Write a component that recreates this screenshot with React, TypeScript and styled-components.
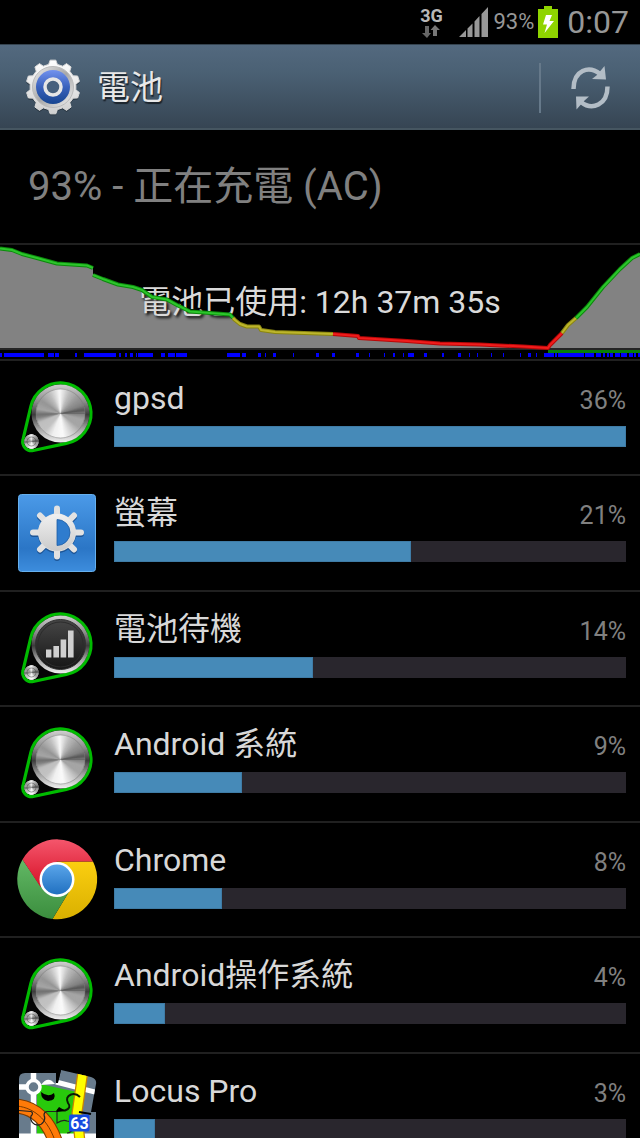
import React from 'react';
import styled, { createGlobalStyle } from 'styled-components';

const GlobalStyle = createGlobalStyle`
  * { box-sizing: border-box; }
  body {
    margin: 0;
    background: #000;
    color: #d6d6d6;
    font-family: Roboto, "Noto Sans CJK TC", sans-serif;
  }
`;

const Screen = styled.div`
  display: flex;
  flex-direction: column;
  height: 100vh;
  overflow: hidden;
  background: #000;
`;

const StatusBar = styled.div`
  flex: none;
  display: flex;
  align-items: center;
  justify-content: flex-end;
  height: 44px;
  padding-right: 11px;
  color: #979797;
`;

const Network = styled.div`
  display: flex;
  flex-direction: column;
  align-items: center;
  width: 24px;
  margin-right: 16px;
  font-size: 18px;
  font-weight: 700;
  line-height: 18px;
  color: #b8b8b8;
`;

const BatteryLevel = styled.span`
  margin: 0 4px;
  font-size: 22px;
  line-height: 44px;
`;

const Clock = styled.time`
  margin-left: 9px;
  font-size: 32px;
  line-height: 44px;
`;

const Header = styled.header`
  flex: none;
  display: flex;
  align-items: center;
  height: 86px;
  padding: 2px 0 0 26px;
  border-top: 1px solid #35434f;
  border-bottom: 2px solid #465661;
  background: linear-gradient(#53697f, #4a6073 35%, #364553);
`;

const Title = styled.h1`
  flex: 1;
  margin: 0 0 0 16px;
  font-size: 33px;
  font-weight: 400;
  line-height: 48px;
  color: #e8e8e8;
  text-shadow: 1px 2px 1px #1a222a;
`;

const RefreshButton = styled.button`
  display: flex;
  align-items: center;
  justify-content: center;
  width: 101px;
  height: 50px;
  padding: 0;
  border: 0;
  border-left: 2px solid #66798a;
  background: none;
`;

const ChargeState = styled.p`
  flex: none;
  height: 115px;
  margin: 0;
  padding-left: 28px;
  border-bottom: 2px solid #202020;
  font-size: 40px;
  line-height: 114px;
  color: #808080;
`;

const History = styled.section`
  flex: none;
  display: grid;
  height: 116px;
  border-bottom: 2px solid #202020;

  > * {
    grid-area: 1 / 1;
    min-width: 0;
  }
`;

const Plot = styled.svg`
  display: block;
  width: 100%;
  height: 114px;
  z-index: 0;
`;

const Caption = styled.p`
  z-index: 0;
  margin: 0;
  padding-top: 38px;
  font-size: 32px;
  line-height: 38px;
  text-align: center;
  color: #dadada;
  text-shadow: 2px 2px 3px #000;
`;

const AppList = styled.ul`
  flex: 1;
  min-height: 0;
  margin: 0;
  padding: 0;
  overflow: hidden;
  list-style: none;
`;

const AppRow = styled.li`
  display: flex;
  align-items: flex-start;
  gap: 17px;
  height: 115px;
  padding: 17px 14px 0 17px;
  border-bottom: 2px solid #202020;

  &:nth-child(even) {
    height: 116px;
  }
`;

const AppIcon = styled.svg`
  flex: none;
  width: 80px;
  height: 80px;
  overflow: visible;
`;

const Usage = styled.div`
  flex: 1;
  min-width: 0;
`;

const UsageText = styled.div`
  display: flex;
  justify-content: space-between;
  align-items: baseline;
  height: 48px;
  line-height: 41px;
`;

const AppName = styled.span`
  font-size: 32px;
  color: #d8d8d8;
`;

const Percent = styled.span`
  font-size: 25px;
  color: #808080;
`;

const Track = styled.div`
  height: 21px;
  background: #29262d;
`;

const Fill = styled.div`
  height: 100%;
  background: #468ab8;
  box-shadow: inset 0 0 0 1px #3f7ca6;
`;

const polar = (cx: number, cy: number, r: number, deg: number) => {
  const a = (deg * Math.PI) / 180;
  return `${(cx + r * Math.cos(a)).toFixed(2)} ${(cy + r * Math.sin(a)).toFixed(2)}`;
};

// Brushed metal: thin wedges whose grey follows these angle/shade stops.
const shades = [
  [0, 130], [14, 165], [35, 165], [55, 205], [82, 250], [108, 240], [130, 195], [155, 190],
  [168, 130], [176, 110], [190, 165], [212, 150], [240, 190], [266, 248], [290, 190], [315, 155], [338, 130], [350, 85], [360, 130],
];
const shadeAt = (deg: number) => {
  const i = shades.findIndex(([a]) => a > deg);
  const [a0, s0] = shades[i - 1];
  const [a1, s1] = shades[i];
  return Math.round(s0 + ((s1 - s0) * (deg - a0)) / (a1 - a0));
};

const Metal = ({ cx, cy, r }: { cx: number; cy: number; r: number }) => (
  <g>
    {Array.from({ length: 120 }, (_, i) => {
      const deg = i * 3;
      const s = shadeAt(deg);
      const end = Math.min(deg + 12, 360);
      return (
        <path
          key={i}
          fill={`rgb(${s},${s},${s})`}
          d={`M${cx} ${cy}L${polar(cx, cy, r, deg)}A${r} ${r} 0 0 1 ${polar(cx, cy, r, end)}Z`}
        />
      );
    })}
  </g>
);

const RotorIcon = ({ signal = false }: { signal?: boolean }) => (
  <AppIcon viewBox="0 0 80 80" aria-hidden="true">
    <defs>
      <linearGradient id="rim" x1="0" y1="0" x2="0" y2="1">
        <stop offset="0" stopColor="#d0d0d0" />
        <stop offset=".3" stopColor="#8a8a8a" />
        <stop offset=".52" stopColor="#3c3c3c" />
        <stop offset=".75" stopColor="#a0a0a0" />
        <stop offset="1" stopColor="#f0f0f0" />
      </linearGradient>
      <linearGradient id="dial" x1="0" y1="0" x2="0" y2="1">
        <stop offset="0" stopColor="#464646" />
        <stop offset="1" stopColor="#161616" />
      </linearGradient>
    </defs>
    <g transform="translate(1 0)">
      <path
        d="M5 61.5L12.8 28.5A30.5 30.5 0 1 1 48.4 65.4L15.2 72.5A8.9 8.9 0 0 1 5 61.5Z"
        fill="#050505"
        stroke="#0b0"
        strokeWidth="3.2"
      />
      <circle cx="42.5" cy="35.5" r="29" fill="url(#rim)" />
      {signal ? (
        <>
          <circle cx="42.5" cy="35.5" r="25" fill="url(#dial)" stroke="#303030" />
          <circle cx="42.5" cy="35.5" r="22.5" fill="none" stroke="#2c2c2c" />
          <path d="M28 40.500h5.4v8H28zM35.4 37H41V48.500h-5.600zM42.600 30.500h5.600v18H42.600zM50 21.500H55.600V48.500h-5.600z" fill="#d0d0d0" />
        </>
      ) : (
        <>
          <Metal cx={42.5} cy={35.5} r={24.5} />
          <circle cx="42.5" cy="35.5" r="24.5" fill="none" stroke="#777" strokeOpacity=".5" />
        </>
      )}
      <Metal cx={13.5} cy={63.5} r={7} />
      <circle cx="13.5" cy="63.5" r="4.5" fill="none" stroke="#444" strokeOpacity=".5" />
    </g>
  </AppIcon>
);

const BrightnessIcon = () => (
  <AppIcon viewBox="0 0 80 80" aria-hidden="true">
    <defs>
      <linearGradient id="sky" x1="0" y1="0" x2="0" y2="1">
        <stop offset="0" stopColor="#4b9ae8" />
        <stop offset=".7" stopColor="#2b76c6" />
        <stop offset="1" stopColor="#3d8ddd" />
      </linearGradient>
      <linearGradient id="sun" x1="0" y1="0" x2="0" y2="1">
        <stop offset="0" stopColor="#f0f0f0" />
        <stop offset="1" stopColor="#cbcbcb" />
      </linearGradient>
    </defs>
    <rect x="1.5" y="1.5" width="77" height="77" rx="3" fill="url(#sky)" stroke="#66b0ee" />
    {[['#1d5596', 1.5], ['#e2e2e2', 0]].map(([color, dy]) => (
      <g key={color} transform={`translate(0 ${dy})`} stroke={color as string} strokeWidth="6" strokeLinecap="round">
        {[0, 45, 90, 135, 180, 225, 270, 315].map((deg) => (
          <path key={deg} d="M40 28V15.5" transform={`rotate(${deg} 40 39.5)`} />
        ))}
        <circle cx="40" cy="39.5" r="16" fill={color as string} />
      </g>
    ))}
    <circle cx="40" cy="39.5" r="18.5" fill="url(#sun)" />
    <path d="M40 26.5A13 13 0 0 1 40 52.5Z" fill="#2f7cce" stroke="#1d5da6" strokeWidth=".8" />
  </AppIcon>
);

const ChromeIcon = () => (
  <AppIcon viewBox="0 0 80 80" aria-hidden="true">
    <defs>
      <linearGradient id="red" x1="0" y1="0" x2="0" y2="1">
        <stop offset="0" stopColor="#f4566c" />
        <stop offset="1" stopColor="#d81228" />
      </linearGradient>
      <linearGradient id="green" x1="0" y1="0" x2="0" y2="1">
        <stop offset="0" stopColor="#62b865" />
        <stop offset="1" stopColor="#3b8e3e" />
      </linearGradient>
      <linearGradient id="yellow" x1="0" y1="0" x2="0" y2="1">
        <stop offset="0" stopColor="#fbce10" />
        <stop offset="1" stopColor="#d9b000" />
      </linearGradient>
      <linearGradient id="blue" x1="0" y1="0" x2="0" y2="1">
        <stop offset="0" stopColor="#5aa5ea" />
        <stop offset="1" stopColor="#2070c0" />
      </linearGradient>
    </defs>
    <path d="M40 21.5H76A40 40 0 0 1 35.5 79L53 50Z" fill="url(#yellow)" />
    <path d="M5.5 19.5A40 40 0 0 0 35.5 79L53 50L40 40L24 47Z" fill="url(#green)" />
    <path d="M5.5 19.5A40 40 0 0 1 76 21.5H40L23.5 47Z" fill="url(#red)" />
    <circle cx="40" cy="39.5" r="17.5" fill="#fff" />
    <circle cx="40" cy="39.5" r="15" fill="url(#blue)" />
  </AppIcon>
);

const MapIcon = () => (
  <AppIcon viewBox="0 0 80 80" aria-hidden="true">
    <clipPath id="tile">
      <path d="M2 8Q2 2 8 2H39V12H41L44-1L74 6Q80 8 79 13L74 41H79V80H2Z" />
    </clipPath>
    <g clipPath="url(#tile)">
      <rect x="2" y="-3" width="78" height="84" fill="#687b8c" />
      <path d="M2 16H16M16.500 2V80" stroke="#fff" strokeWidth="5.5" fill="none" />
      <path d="M20 23L23 13L60 21L62 42L57 63H20Z" fill="#28c90c" />
      <path d="M24 14Q31 4 38 13" fill="#fff" />
      <path d="M39 11L80 21.5M2 65H79" stroke="#fff" strokeWidth="5" fill="none" />
      <path d="M66 0L60 42L64 80" stroke="#c98500" strokeWidth="11" fill="none" />
      <path d="M66 0L60 42L64 80" stroke="#ff0" strokeWidth="8.5" fill="none" />
      <path d="M0 35C18 37 34 50 41 80" stroke="#7a3a00" strokeWidth="15" fill="none" />
      <path d="M0 35C18 37 34 50 41 80" stroke="#ff7a08" strokeWidth="13" fill="none" />
      <path d="M0 35C18 37 34 50 41 80" stroke="#7a3a00" strokeWidth="1" fill="none" />
    </g>
    <path d="M39 3V12L41 11L44-1Z" fill="#000" />
    <circle cx="16.5" cy="16" r="6.5" fill="#687b8c" stroke="#fff" strokeWidth="3.5" />
    <path d="M24 21Q31 27 37 22Q40 29 31 30Q24 29 24 21Z" fill="#000" />
    <path
      d="M2 39.5L14 40.5Q17 42 14 45A7 7 0 1 0 27 44Q27 41 30 40.5H40V52Q46 48 50 50A6 6 0 0 1 50 62"
      fill="none"
      stroke="#222"
      strokeWidth="1.2"
    />
    <path d="M40 39.5H48Q55 37 51 32Q48 26 54 23.500Q59 22 63 26" fill="none" stroke="#0a1a05" strokeWidth="2" />
    <path d="M39 40L42 36L48 39.500L40 41Z" fill="#000" />
    <path d="M62 41L74 43" stroke="#000" strokeWidth="2" />
    <rect x="52" y="43.5" width="20.5" height="17" rx="2" fill="#164be0" />
    <text x="62.5" y="58" fill="#fff" fontFamily="Roboto, sans-serif" fontWeight="700" fontSize="16" textAnchor="middle">63</text>
  </AppIcon>
);

const SettingsIcon = () => {
  const cx = 27;
  const cy = 28;
  const teeth = Array.from({ length: 10 }, (_, i) => {
    const a = i * 36 - 90;
    return [[23, -11], [27, -6], [27, 6], [23, 11]].map(([r, d]) => polar(cx, cy, r, a + d)).join('L');
  }).join('L');
  return (
    <svg width="55" height="58" viewBox="0 0 55 58" aria-hidden="true">
      <defs>
        <linearGradient id="cog" x1="0" y1="0" x2="0" y2="1">
          <stop offset="0" stopColor="#fff" />
          <stop offset="1" stopColor="#cfcfcf" />
        </linearGradient>
        <linearGradient id="cogRing" x1="0" y1="0" x2="1" y2="1">
          <stop offset="0" stopColor="#efefef" />
          <stop offset=".5" stopColor="#a8a8a8" />
          <stop offset="1" stopColor="#f4f4f4" />
        </linearGradient>
        <linearGradient id="cogBlue" x1="0" y1="0" x2="0" y2="1">
          <stop offset="0" stopColor="#7292ee" />
          <stop offset=".5" stopColor="#3a62bd" />
          <stop offset="1" stopColor="#174590" />
        </linearGradient>
      </defs>
      <path d={`M${teeth}Z`} fill="#26333e" transform="translate(0 1.5)" />
      <path d={`M${teeth}Z`} fill="url(#cog)" stroke="#d9d9d9" strokeLinejoin="round" />
      <circle cx={cx} cy={cy} r="20.5" fill="url(#cogRing)" stroke="#bbb" />
      <circle cx={cx} cy={cy} r="17" fill="url(#cogBlue)" />
      <circle cx={cx} cy={cy} r="8" fill="#46607d" stroke="#e6e6e6" strokeWidth="3.5" />
    </svg>
  );
};

const RefreshIcon = () => (
  <svg width="40" height="44" viewBox="0 0 40 44" fill="none" aria-hidden="true">
    <path d="M2.5 23C2.5 4 18-1 29 8" stroke="#b3bdc6" strokeWidth="4.5" />
    <path d="M33.5 0L35 13.5L21 13L26 9Z" fill="#b3bdc6" />
    <path d="M36.5 20.5C36.5 39 21 45 10 36" stroke="#b3bdc6" strokeWidth="4.5" />
    <path d="M5.5 43.5L5 30.500H18L13 35Z" fill="#b3bdc6" />
  </svg>
);

const drain =
  '0,3.5 12,5 22,9 37,13 57,18.5 87,20.5 93,23 93,30 103,34 118,39.5 133,42 142,45 152,52 167,54.5 177,60 190,66.5 230,69.5 235,75 240,79 247,81.5 259,81.5 261,85 275,87 333,89 358,91 359,93 407,96 440,98.5 480,99.5 523,101.5 548,103';
const rise = '548,103 550,100 557,93 562,88 568,80 576,73 587,62 603,42 620,24 632,13 640,9';

// [edge colour, core colour, points]
const lineParts = [
  ['#0b8a0b', '#2cc52c', '0,3.5 12,5 22,9 37,13 57,18.5 87,20.5 93,23'],
  ['#0b8a0b', '#2cc52c', '93,30 103,34 118,39.5 133,42 142,45 152,52 167,54.5 177,60 190,66.5 230,69.5 233,73'],
  ['#8a8610', '#bdb62c', '233,73 235,75 240,79 247,81.5 259,81.5 261,85 275,87 333,89'],
  ['#b80808', '#f01c1c', '333,89 358,91 359,93 407,96 440,98.5 480,99.5 523,101.5 548,103 550,100 557,93 562,88'],
  ['#8a8610', '#bdb62c', '562,88 568,80 576,73'],
  ['#0b8a0b', '#2cc52c', '576,73 587,62 603,42 620,24 632,13 640,9'],
];

// [start, width] of every wake period along the timeline
const wake = [
  [0, 2], [4, 40], [48, 6], [55, 4], [75, 2], [84, 30], [114, 2], [119, 2], [125, 2], [130, 3], [136, 1], [138, 15],
  [161, 4], [168, 7], [176, 11], [227, 13], [242, 4], [258, 3], [265, 1], [273, 3], [293, 1], [316, 3], [332, 3],
  [356, 3], [369, 1], [384, 1], [393, 2], [403, 1], [408, 6], [424, 3], [442, 2], [458, 3], [469, 1], [477, 1],
  [491, 1], [503, 1], [520, 1], [528, 3], [536, 1], [544, 10], [555, 2], [558, 26], [585, 9], [596, 5], [603, 2],
  [607, 2], [610, 3], [615, 5], [621, 6], [629, 4], [634, 2], [638, 2],
];

const apps = [
  { name: 'gpsd', percent: 36, icon: <RotorIcon /> },
  { name: '螢幕', percent: 20.9, icon: <BrightnessIcon /> },
  { name: '電池待機', percent: 14, icon: <RotorIcon signal /> },
  { name: 'Android 系統', percent: 9, icon: <RotorIcon /> },
  { name: 'Chrome', percent: 7.6, icon: <ChromeIcon /> },
  { name: 'Android操作系統', percent: 3.6, icon: <RotorIcon /> },
  { name: 'Locus Pro', percent: 2.9, icon: <MapIcon /> },
];

export default function App() {
  return (
    <Screen>
      <GlobalStyle />
      <StatusBar>
        <Network>
          3G
          <svg width="18" height="13" viewBox="0 0 18 13" fill="#666" aria-hidden="true">
            <path d="M3 1H7V8H9L5 13L0 8H3Z" />
            <path d="M11 11V5H8.5L13 0L18 5H15V11Z" fill="#777" />
          </svg>
        </Network>
        <svg width="30" height="30" viewBox="0 0 30 30" fill="#979797" aria-hidden="true">
          <path d="M0 30L7 23V30ZM8.5 21.5L13.5 16.5V30H8.5ZM15.5 14.5L20.5 9V30H15.5ZM22.5 7L29 0V30H22.5Z" />
        </svg>
        <BatteryLevel>93%</BatteryLevel>
        <svg width="20" height="32" viewBox="0 0 20 32" aria-hidden="true">
          <path d="M6 0H14V3H20V32H0V3H6Z" fill="#8fd400" />
          <path d="M8 9H14L11.5 15H16L6.5 27L9 18.5H5Z" fill="#fff" />
        </svg>
        <Clock>0:07</Clock>
      </StatusBar>
      <Header>
        <SettingsIcon />
        <Title>電池</Title>
        <RefreshButton aria-label="重新整理">
          <RefreshIcon />
        </RefreshButton>
      </Header>
      <ChargeState>93% - 正在充電 (AC)</ChargeState>
      <History>
        <Plot viewBox="0 0 640 114" preserveAspectRatio="none" aria-hidden="true">
          <polygon points={`0,103 ${drain} ${rise} 640,103`} fill="#828282" />
          <path d="M0 104H640" stroke="#252525" strokeWidth="2" />
          <rect x="548" y="105" width="92" height="3" fill="#078007" />
          {wake.map(([x, w]) => (
            <rect key={x} x={x} y="108" width={w} height="4" fill="#00f" />
          ))}
        </Plot>
        <Caption>電池已使用: 12h 37m 35s</Caption>
        <Plot viewBox="0 0 640 114" preserveAspectRatio="none" fill="none" aria-hidden="true">
          {lineParts.map(([edge, core, points]) => (
            <g key={points} strokeLinejoin="round">
              <polyline points={points} stroke={edge} strokeWidth="4" />
              <polyline points={points} stroke={core} strokeWidth="2" />
            </g>
          ))}
        </Plot>
      </History>
      <AppList>
        {apps.map(({ name, percent, icon }) => (
          <AppRow key={name}>
            {icon}
            <Usage>
              <UsageText>
                <AppName>{name}</AppName>
                <Percent>{Math.round(percent)}%</Percent>
              </UsageText>
              <Track>
                <Fill style={{ width: `${(percent / 36) * 100}%` }} />
              </Track>
            </Usage>
          </AppRow>
        ))}
      </AppList>
    </Screen>
  );
}
